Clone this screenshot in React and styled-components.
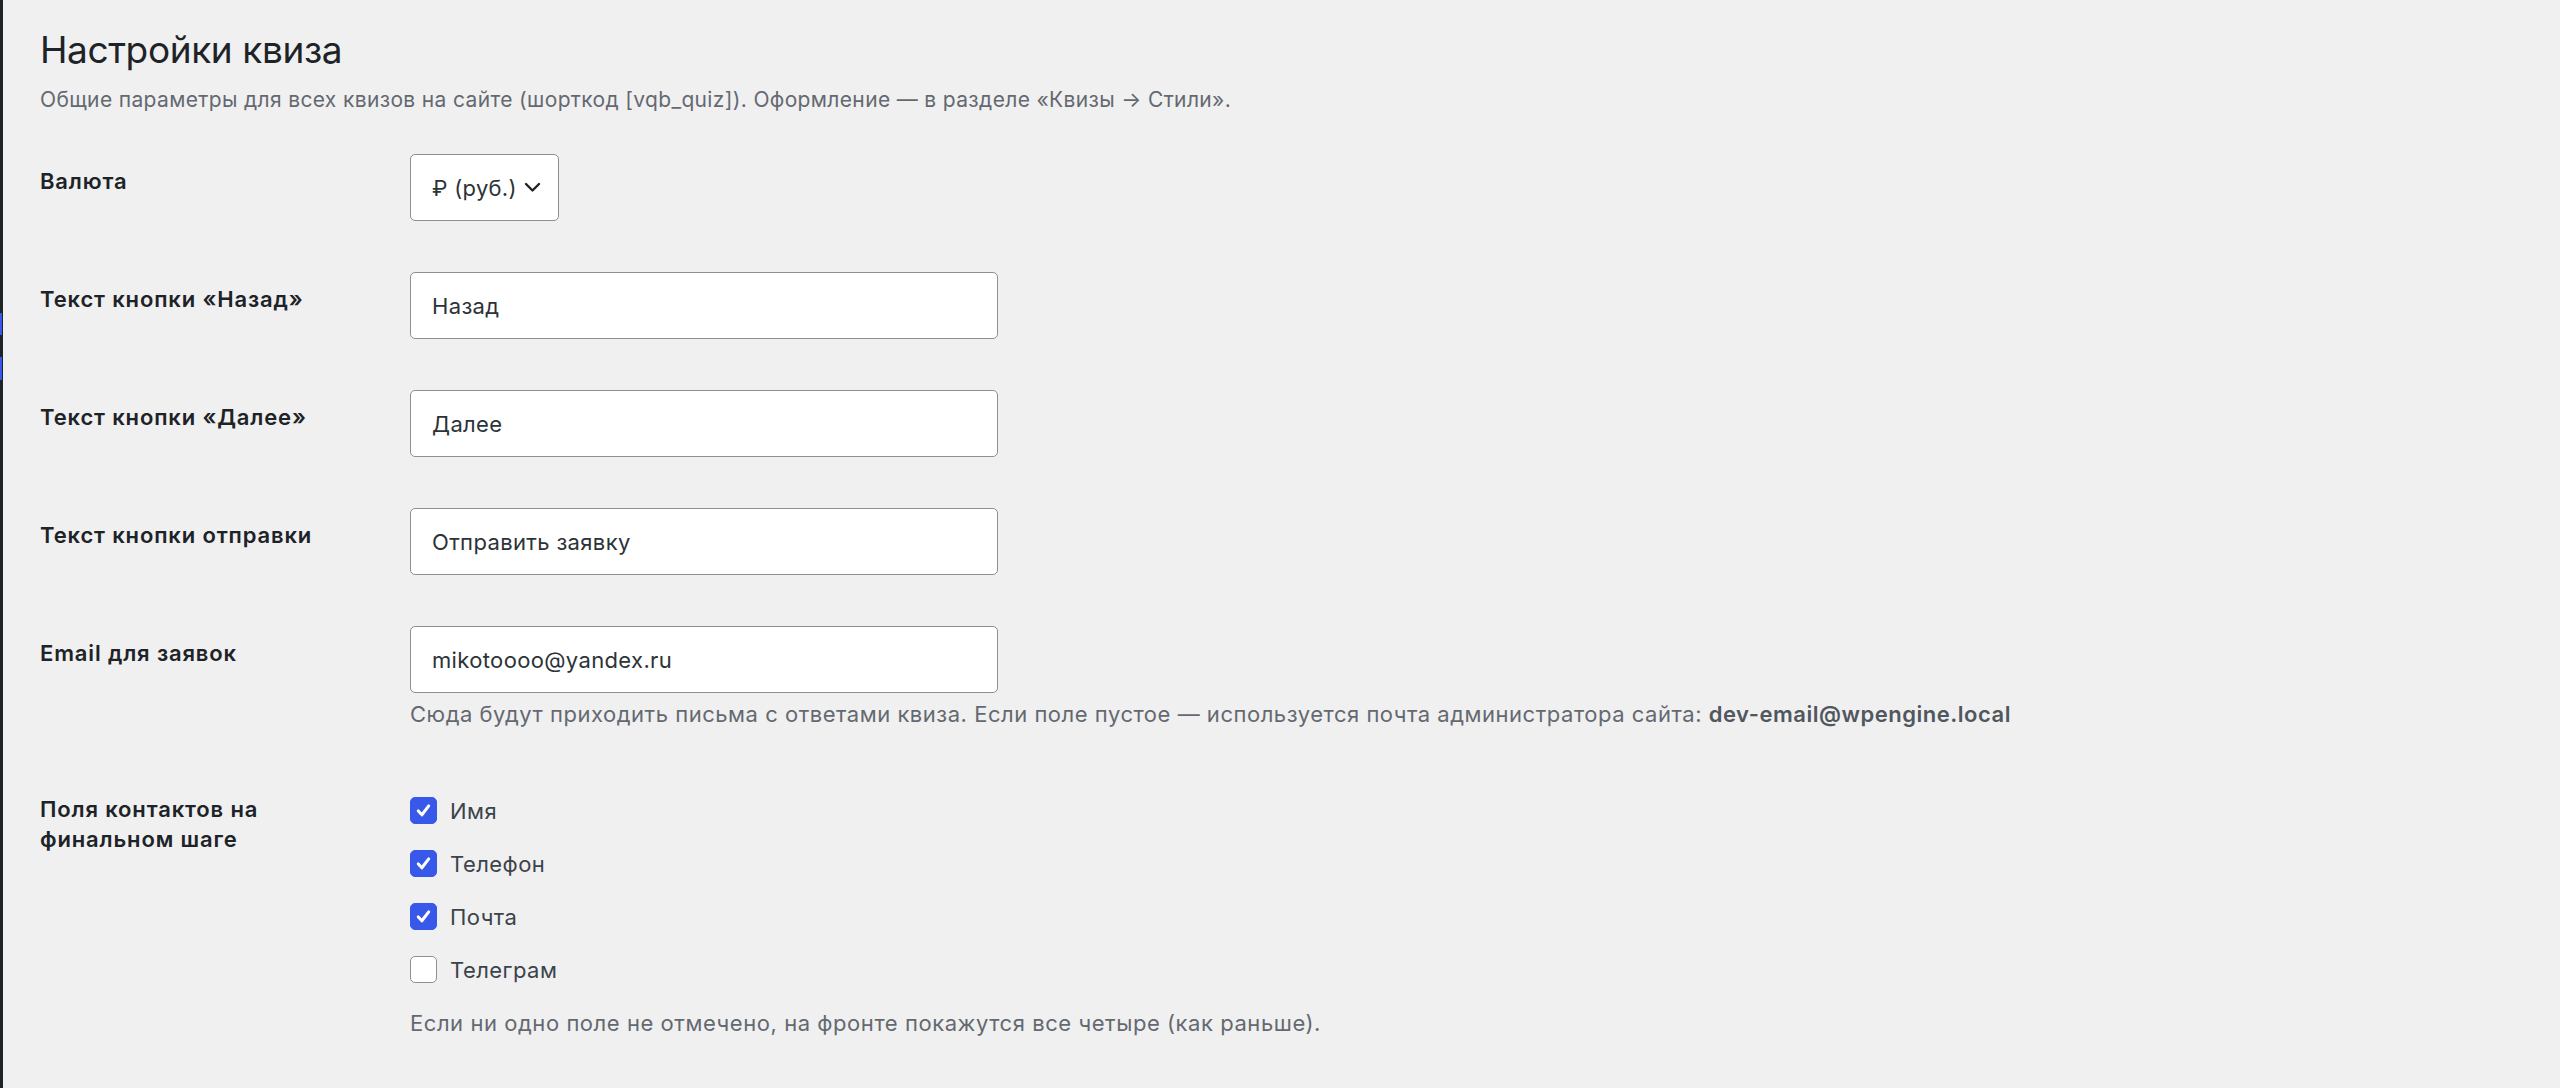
import React from "react";
import styled, { createGlobalStyle } from "styled-components";

const GlobalStyle = createGlobalStyle`
  html, body {
    margin: 0;
    padding: 0;
    background: #f0f0f1;
  }
  body {
    font-family: "Inter", "Noto Sans", "Liberation Sans", sans-serif;
    color: #1d2327;
    -webkit-font-smoothing: antialiased;
  }
  * { box-sizing: border-box; }
`;

const Page = styled.div`
  display: flex;
  min-height: 100vh;
`;

const Rail = styled.div`
  flex: 0 0 3px;
  display: flex;
  flex-direction: column;
  background: #1d2327;
`;

const RailSeg = styled.div`
  flex: 0 0 ${(p) => p.$h}px;
  background: ${(p) => (p.$active ? "#3858e9" : "transparent")};
  width: ${(p) => (p.$active ? "2px" : "3px")};
`;

const Wrap = styled.main`
  flex: 1;
  padding: 0 0 0 37px;
`;

const Title = styled.h1`
  margin: 25px 0 0;
  font-size: 37px;
  line-height: 49px;
  font-weight: 400;
  color: #1d2327;
  letter-spacing: -0.4px;
`;

const Lead = styled.p`
  margin: 11px 0 13.5px;
  font-size: 21px;
  line-height: 30px;
  letter-spacing: 0.35px;
  color: #646970;
`;

const Form = styled.form`
  display: flex;
  flex-direction: column;
`;

const Row = styled.div`
  display: grid;
  grid-template-columns: 370px 1fr;
  padding: 25.5px 0;
`;

const Label = styled.label`
  display: block;
  padding: ${(p) => (p.$multi ? "14px" : "12px")} 40px 0 0;
  font-size: 22px;
  line-height: 30px;
  letter-spacing: 0.85px;
  font-weight: 600;
  color: #1d2327;
`;

const Cell = styled.div`
  display: flex;
  flex-direction: column;
  align-items: flex-start;
`;

const TextInput = styled.input`
  width: 588px;
  height: 67px;
  padding: 0 21px;
  border: 1.5px solid #8c8f94;
  border-radius: 5px;
  background: #fff;
  font-family: inherit;
  font-size: 22px;
  letter-spacing: 0.35px;
  color: #2c3338;
  outline: none;
`;

const SelectWrap = styled.div`
  position: relative;
  display: inline-block;
`;

const Select = styled.select`
  appearance: none;
  -webkit-appearance: none;
  width: 149px;
  height: 67px;
  padding: 0 40px 0 21px;
  border: 1.5px solid #8c8f94;
  border-radius: 5px;
  background: #fff;
  font-family: inherit;
  font-size: 22px;
  letter-spacing: 0.3px;
  color: #2c3338;
  outline: none;
`;

const Chevron = styled.svg`
  position: absolute;
  right: 18px;
  top: 27px;
  width: 17px;
  height: 12px;
  pointer-events: none;
`;

const Description = styled.p`
  margin: 6px 0 0;
  font-size: 22px;
  line-height: 30px;
  letter-spacing: 0.52px;
  color: #646970;
  white-space: nowrap;

  strong {
    font-weight: 600;
    color: #50575e;
  }
`;

const Fieldset = styled.fieldset`
  margin: 0;
  padding: 4px 0 0;
  border: 0;
  display: flex;
  flex-direction: column;
`;

const CheckRow = styled.label`
  display: flex;
  align-items: center;
  gap: 13px;
  height: 53px;
  font-size: 22px;
  letter-spacing: 0.45px;
  color: #3c434a;
`;

const Box = styled.span`
  flex: 0 0 27px;
  width: 27px;
  height: 27px;
  border-radius: 5px;
  display: flex;
  align-items: center;
  justify-content: center;
  background: ${(p) => (p.$checked ? "#3858e9" : "#fff")};
  border: 1.5px solid ${(p) => (p.$checked ? "#3858e9" : "#8c8f94")};
`;

const Note = styled.p`
  margin: 12px 0 0;
  font-size: 22px;
  line-height: 30px;
  letter-spacing: 0.55px;
  color: #646970;
`;

function Check({ checked, children }) {
  return (
    <CheckRow>
      <Box $checked={checked}>
        {checked && (
          <svg width="19" height="19" viewBox="0 0 20 20" fill="none">
            <path
              d="M4.5 10.5 L8.3 14.5 L15.5 5.2"
              stroke="#fff"
              strokeWidth="3.2"
              strokeLinecap="round"
              strokeLinejoin="round"
            />
          </svg>
        )}
      </Box>
      {children}
    </CheckRow>
  );
}

export default function App() {
  return (
    <>
      <GlobalStyle />
      <Page>
        <Rail>
          <RailSeg $h={313} />
          <RailSeg $h={22} $active />
          <RailSeg $h={22} />
          <RailSeg $h={23} $active />
        </Rail>
        <Wrap>
          <Title>Настройки квиза</Title>
          <Lead>
            Общие параметры для всех квизов на сайте (шорткод [vqb_quiz]). Оформление — в разделе «Квизы → Стили».
          </Lead>
          <Form onSubmit={(e) => e.preventDefault()}>
            <Row>
              <Label htmlFor="currency">Валюта</Label>
              <Cell>
                <SelectWrap>
                  <Select id="currency" defaultValue="rub">
                    <option value="rub">₽ (руб.)</option>
                  </Select>
                  <Chevron viewBox="0 0 17 12" fill="none">
                    <path
                      d="M2 3 L8.5 9.5 L15 3"
                      stroke="#1d2327"
                      strokeWidth="2.4"
                      strokeLinecap="round"
                      strokeLinejoin="round"
                    />
                  </Chevron>
                </SelectWrap>
              </Cell>
            </Row>
            <Row>
              <Label htmlFor="back">Текст кнопки «Назад»</Label>
              <Cell>
                <TextInput id="back" defaultValue="Назад" />
              </Cell>
            </Row>
            <Row>
              <Label htmlFor="next">Текст кнопки «Далее»</Label>
              <Cell>
                <TextInput id="next" defaultValue="Далее" />
              </Cell>
            </Row>
            <Row>
              <Label htmlFor="submit">Текст кнопки отправки</Label>
              <Cell>
                <TextInput id="submit" defaultValue="Отправить заявку" />
              </Cell>
            </Row>
            <Row>
              <Label htmlFor="email">Email для заявок</Label>
              <Cell>
                <TextInput id="email" defaultValue="mikotoooo@yandex.ru" />
                <Description>
                  Сюда будут приходить письма с ответами квиза. Если поле пустое — используется почта администратора сайта:{" "}
                  <strong>dev-email@wpengine.local</strong>
                </Description>
              </Cell>
            </Row>
            <Row>
              <Label as="div" $multi>
                Поля контактов на финальном шаге
              </Label>
              <Cell>
                <Fieldset>
                  <Check checked>Имя</Check>
                  <Check checked>Телефон</Check>
                  <Check checked>Почта</Check>
                  <Check>Телеграм</Check>
                </Fieldset>
                <Note>Если ни одно поле не отмечено, на фронте покажутся все четыре (как раньше).</Note>
              </Cell>
            </Row>
          </Form>
        </Wrap>
      </Page>
    </>
  );
}
